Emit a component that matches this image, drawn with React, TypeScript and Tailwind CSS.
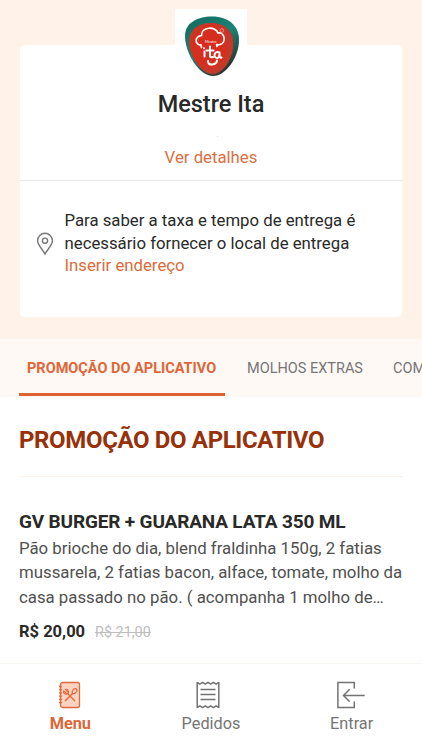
import React from "react";

function Logo() {
  return (
    <svg viewBox="0 0 72 72" className="block h-[72px] w-[72px]" aria-label="Mestre Ita">
      <defs>
        <radialGradient id="red" cx="45%" cy="45%" r="58%">
          <stop offset="0" stopColor="#d92a20" />
          <stop offset="0.65" stopColor="#d3301f" />
          <stop offset="0.88" stopColor="#c23a2a" />
          <stop offset="1" stopColor="#80423a" />
        </radialGradient>
        <linearGradient id="teal" x1="0" y1="0" x2="0.7" y2="1">
          <stop offset="0" stopColor="#17675c" />
          <stop offset="0.55" stopColor="#188577" />
          <stop offset="1" stopColor="#2c2b27" />
        </linearGradient>
      </defs>
      <path d="M10 27C10 14 22 7.5 37 7.5C54 7.5 64 17 64 31C64 48 51 67 38 67C24 67 10 44 10 27Z" fill="url(#teal)" />
      <path d="M14 31C15 20 24 14 36 14C50 14 58.5 22 58.5 34C58.5 50 48 65 38 65.5C27 65.5 13 47 14 31Z" fill="url(#red)" />
      <path d="M26.5 38.5L26 36C20.5 36.5 18.5 28 26.5 26.5C26 17.5 41 17 43 24C50 23 51.5 34 45 35.5C42.5 36.5 41.5 35 41.5 35L42 37.5" fill="none" stroke="white" strokeWidth="1.7" strokeLinecap="round" />
      <circle cx="46.8" cy="21.5" r="1.8" fill="none" stroke="#f6c6bc" strokeWidth="0.6" />
      <text x="30" y="34" fontSize="3.8" fill="white" className="font-['Lato']">Mestre</text>
      <g fill="none" stroke="white" strokeWidth="2" strokeLinecap="round">
        <path d="M29.5 42.5V47.5M35 37.5V47Q35.5 49 38 48M31.5 41.5H38.5M44.5 43.5C38.5 41 38 49.5 42.5 49Q44.5 48.5 44.5 43.5V47.5Q45 49 46.5 48.5M33 52Q33 56 37.5 55.5Q41.5 55 42 51.5" />
        <path d="M29 39.2V39.3" />
      </g>
    </svg>
  );
}

function PinIcon() {
  return (
    <svg viewBox="0 0 18 24" className="h-6 w-[18px] shrink-0" fill="none" stroke="#77777a" strokeWidth="1.4">
      <path d="M9 22C7 18 1.6 13 1.6 8.7a7.4 7.4 0 0 1 14.8 0C16.4 13 11 18 9 22Z" />
      <circle cx="9" cy="8.7" r="2.6" />
    </svg>
  );
}

function MenuIcon() {
  return (
    <svg viewBox="0 0 24 28" className="h-7 w-6" fill="none" stroke="#e06a3b">
      <rect x="2.5" y="1.5" width="19" height="25" rx="2" fill="#fdd2c1" strokeWidth="1.3" />
      <path d="M1 5.5H4M1 8.7H4M1 11.9H4M1 15.1H4M1 18.3H4M1 21.5H4" strokeWidth="1.3" />
      <path d="M7 20L14.8 12.2M17 20L9.5 12.5" strokeWidth="1.4" />
      <path d="M5.5 9.7C5 12.8 7.5 13.8 9.5 12.7C11.3 11.2 10.8 9.5 8.4 7.8M5.6 9.6L9 13M7 8.2L10.4 11.6" strokeWidth="1.1" />
      <path d="M14.3 12.5C13.3 9.7 16 7.2 18.3 7.8C20.2 9.8 17.5 13.4 14.3 12.5Z" strokeWidth="1.2" />
    </svg>
  );
}

function ReceiptIcon() {
  return (
    <svg viewBox="0 0 24 28" className="mr-[5px] h-7 w-6" fill="none" stroke="#737373" strokeWidth="1.5">
      <path d="M1.2 1V27M22.8 1V27M1.2 1.4L3.9 3.2L6.6 1.4L9.3 3.2L12 1.4L14.7 3.2L17.4 1.4L20.1 3.2L22.8 1.4M1.2 26.6L3.9 24.8L6.6 26.6L9.3 24.8L12 26.6L14.7 24.8L17.4 26.6L20.1 24.8L22.8 26.6M4.5 8.5H19.5M4.5 13.5H19.5M4.5 18.5H19.5" />
    </svg>
  );
}

function EnterIcon() {
  return (
    <svg viewBox="0 0 30 28" className="mr-px h-7 w-[30px]" fill="none" stroke="#737373" strokeWidth="1.5">
      <path d="M18.3 7.5V1.5H1.9V26.6H18.3V20.5M28.7 14.5H7.5M13.7 8.3L7.5 14.5L13.7 20.7" />
    </svg>
  );
}

export default function App() {
  return (
    <div className="flex h-[750px] w-[422px] flex-col overflow-hidden bg-white font-['Roboto',sans-serif] text-[#292927]">
      <header className="h-[339px] shrink-0 bg-[#fff2e8] px-5 pt-[45px]">
        <section className="flex h-[272px] flex-col rounded-[5px] bg-white">
          <div className="flex h-[136px] shrink-0 flex-col items-center border-b border-[#e9e9e9]">
            <div className="-mt-[36px] h-[72px] w-[72px] shrink-0 bg-white"><Logo /></div>
            <h1 className="mt-[7px] text-[23.5px] leading-8 font-medium"><span>Mestre Ita</span></h1>
            <span className="mt-4 ml-3 h-px w-px bg-[#dddddd]" />
            <a className="mt-[8px] text-[16.75px] leading-6 text-[#d96f43]"><span>Ver detalhes</span></a>
          </div>
          <div className="flex pt-7 pl-4">
            <div className="mt-[23px]"><PinIcon /></div>
            <p className="ml-[10.5px] text-[16.75px] leading-[22.5px] whitespace-nowrap">
              <span>Para saber a taxa e tempo de entrega é</span><br />
              <span>necessário fornecer o local de entrega</span><br />
              <span className="text-[#de6a3b]">Inserir endereço</span>
            </p>
          </div>
        </section>
      </header>
      <nav className="flex h-[58px] shrink-0 bg-[#fff9f5] pl-[19px] text-[14.5px] leading-[60px] whitespace-nowrap">
        <div className="h-[57px] w-[206px] shrink-0 border-b-[3px] border-[#dd6337] pl-2 font-bold text-[#de6638]"><span>PROMOÇÃO DO APLICATIVO</span></div>
        <div className="w-[146px] shrink-0 pl-[22px] text-[#757575]"><span>MOLHOS EXTRAS</span></div>
        <div className="pl-[22px] text-[#757575]"><span>COMBOS</span></div>
      </nav>
      <main className="h-[266px] shrink-0 px-[19px]">
        <h2 className="h-20 border-b border-[#f8f2eb] pt-[27px] text-2xl leading-8 font-bold tracking-[-0.36px] whitespace-nowrap text-[#983009]"><span>PROMOÇÃO DO APLICATIVO</span></h2>
        <h3 className="mt-[33px] text-[19px] leading-6 font-bold tracking-[-0.16px] whitespace-nowrap"><span>GV BURGER + GUARANA LATA 350 ML</span></h3>
        <p className="mt-[1.5px] text-[16.8px] leading-[24.5px] whitespace-nowrap text-[#50504f]">
          <span>Pão brioche do dia, blend fraldinha 150g, 2 fatias</span><br />
          <span>mussarela, 2 fatias bacon, alface, tomate, molho da</span><br />
          <span>casa passado no pão. ( acompanha 1 molho de…</span>
        </p>
        <div className="mt-[10.5px] flex items-baseline gap-[10px] leading-6">
          <strong className="text-[16.5px]">R$ 20,00</strong>
          <s className="text-[14.4px] text-[#bdbdbd]">R$ 21,00</s>
        </div>
      </main>
      <footer className="grid h-[87px] shrink-0 grid-cols-3 border-t border-[#f8f4ef] pt-[17px] text-center text-[16.3px] leading-6 text-[#757575]">
        <div className="flex flex-col items-center font-bold text-[#dc6638]"><MenuIcon /><span className="mt-[3px]">Menu</span></div>
        <div className="flex flex-col items-center"><ReceiptIcon /><span className="mt-[3px]">Pedidos</span></div>
        <div className="flex flex-col items-center"><EnterIcon /><span className="mt-[3px]">Entrar</span></div>
      </footer>
    </div>
  );
}
